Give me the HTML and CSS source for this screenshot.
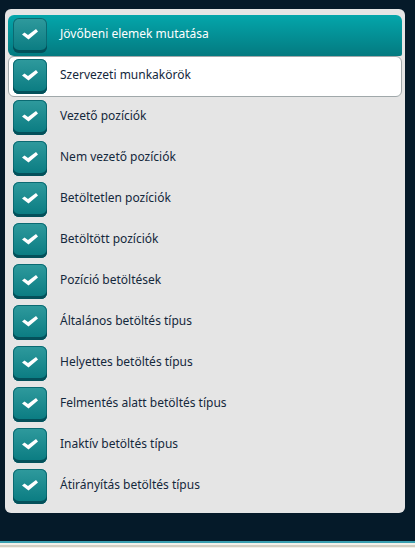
FILE: index.html
```html
<!DOCTYPE html>
<html lang="en">
<head>
    <meta charset="UTF-8">
    <meta name="viewport" content="width=device-width, initial-scale=1.0">
    <title>Szűrők</title>
    <link rel="stylesheet" href="styles.css">
</head>
<body>
    <div class="screen">
        <ul class="panel">
            <li class="row header"><span class="box"><svg viewBox="0 0 16 11"><path d="M0 5.5 L2.5 3.5 L6 6 L14 0 L16 2.5 L6.5 10.5 Z"/></svg></span><span class="label">Jövőbeni elemek mutatása</span></li>
            <li class="row selected"><span class="box"><svg viewBox="0 0 16 11"><path d="M0 5.5 L2.5 3.5 L6 6 L14 0 L16 2.5 L6.5 10.5 Z"/></svg></span><span class="label">Szervezeti munkakörök</span></li>
            <li class="row"><span class="box"><svg viewBox="0 0 16 11"><path d="M0 5.5 L2.5 3.5 L6 6 L14 0 L16 2.5 L6.5 10.5 Z"/></svg></span><span class="label">Vezető pozíciók</span></li>
            <li class="row"><span class="box"><svg viewBox="0 0 16 11"><path d="M0 5.5 L2.5 3.5 L6 6 L14 0 L16 2.5 L6.5 10.5 Z"/></svg></span><span class="label">Nem vezető pozíciók</span></li>
            <li class="row"><span class="box"><svg viewBox="0 0 16 11"><path d="M0 5.5 L2.5 3.5 L6 6 L14 0 L16 2.5 L6.5 10.5 Z"/></svg></span><span class="label">Betöltetlen pozíciók</span></li>
            <li class="row"><span class="box"><svg viewBox="0 0 16 11"><path d="M0 5.5 L2.5 3.5 L6 6 L14 0 L16 2.5 L6.5 10.5 Z"/></svg></span><span class="label">Betöltött pozíciók</span></li>
            <li class="row"><span class="box"><svg viewBox="0 0 16 11"><path d="M0 5.5 L2.5 3.5 L6 6 L14 0 L16 2.5 L6.5 10.5 Z"/></svg></span><span class="label">Pozíció betöltések</span></li>
            <li class="row"><span class="box"><svg viewBox="0 0 16 11"><path d="M0 5.5 L2.5 3.5 L6 6 L14 0 L16 2.5 L6.5 10.5 Z"/></svg></span><span class="label">Általános betöltés típus</span></li>
            <li class="row"><span class="box"><svg viewBox="0 0 16 11"><path d="M0 5.5 L2.5 3.5 L6 6 L14 0 L16 2.5 L6.5 10.5 Z"/></svg></span><span class="label">Helyettes betöltés típus</span></li>
            <li class="row"><span class="box"><svg viewBox="0 0 16 11"><path d="M0 5.5 L2.5 3.5 L6 6 L14 0 L16 2.5 L6.5 10.5 Z"/></svg></span><span class="label">Felmentés alatt betöltés típus</span></li>
            <li class="row"><span class="box"><svg viewBox="0 0 16 11"><path d="M0 5.5 L2.5 3.5 L6 6 L14 0 L16 2.5 L6.5 10.5 Z"/></svg></span><span class="label">Inaktív betöltés típus</span></li>
            <li class="row"><span class="box"><svg viewBox="0 0 16 11"><path d="M0 5.5 L2.5 3.5 L6 6 L14 0 L16 2.5 L6.5 10.5 Z"/></svg></span><span class="label">Átirányítás betöltés típus</span></li>
        </ul>
    </div>
    <div class="strip"></div>
</body>
</html>
```

FILE: styles.css
```css
html, body {
    margin: 0;
    padding: 0;
    height: 100%;
    overflow: hidden;
}
body {
    display: flex;
    flex-direction: column;
    font-family: 'Noto Sans', sans-serif;
    font-size: 12px;
    background: #051a29;
}
.screen {
    height: 541px;
    padding: 9px 10px 0 5px;
    box-sizing: border-box;
}
.panel {
    list-style: none;
    margin: 0;
    padding: 6px 3px 0;
    height: 504px;
    box-sizing: border-box;
    background: #e5e5e5;
    border-radius: 6px;
}
.row {
    display: flex;
    align-items: center;
    height: 41px;
    padding-left: 5px;
    box-sizing: border-box;
    color: #14283c;
}
.label {
    padding-bottom: 4px;
}
.header {
    background: linear-gradient(#04a6ab, #047a80);
    border-radius: 6px 6px 2px 6px;
    color: #fff;
}
.selected {
    background: #fff;
    border: 1px solid #a0a8aa;
    border-radius: 6px;
    padding-left: 4px;
}
.box {
    display: flex;
    align-items: center;
    justify-content: center;
    width: 34px;
    height: 35px;
    margin-right: 13px;
    box-sizing: border-box;
    padding-bottom: 3px;
    border-radius: 6px;
    background: linear-gradient(#2f9a9d, #087a80);
    box-shadow: inset 0 -3px 0 #04505a, inset 0 0 0 1px #0a6a72;
}
.box svg {
    width: 16px;
    height: 11px;
}
.box path {
    fill: #fff;
}
.strip {
    height: 7px;
    background: linear-gradient(#3a9fb0 0, #3a9fb0 2px, #f3f1ea 2px, #f3f1ea 4px, #d2cec2 4px, #d2cec2 6px, #f3f1ea 6px);
}
```
